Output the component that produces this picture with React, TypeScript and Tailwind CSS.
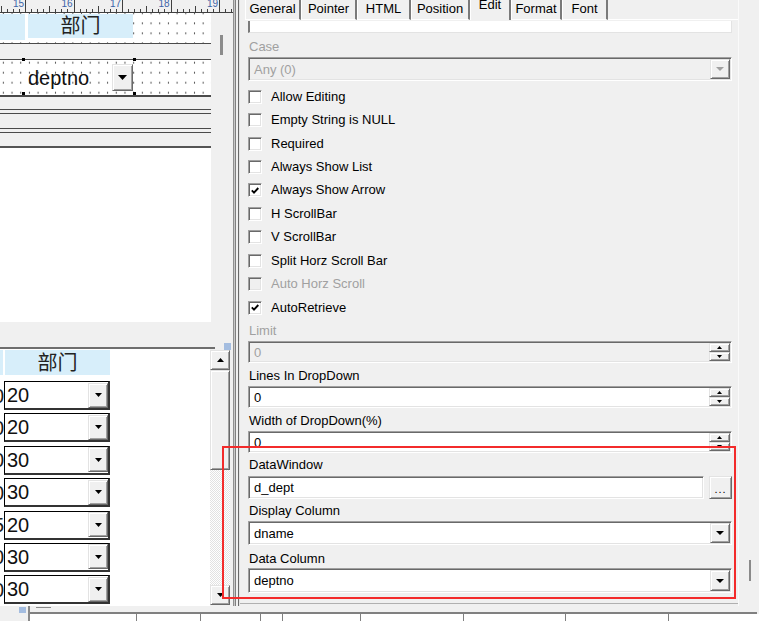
import React from 'react';

const font = "font-['Liberation_Sans',Arial,sans-serif]";
const cjk = "font-['Liberation_Sans','Noto_Sans_CJK_SC',sans-serif]";

const sunken =
  'border border-t-[#a0a0a0] border-l-[#a0a0a0] border-r-white border-b-white shadow-[inset_1px_1px_0_#696969,inset_-1px_-1px_0_#e3e3e3]';
const raised =
  'border border-t-[#e3e3e3] border-l-[#e3e3e3] border-r-[#696969] border-b-[#696969] bg-[#f0f0f0] shadow-[inset_1px_1px_0_#ffffff,inset_-1px_-1px_0_#a0a0a0]';
const dots =
  '[background-image:radial-gradient(circle,#5a5a5a_0.7px,transparent_1.1px)] [background-size:8.7px_10px]';

function Tri({ up, w = 7, color = '#000' }: { up?: boolean; w?: number; color?: string }) {
  const h = Math.ceil(w / 2);
  return (
    <svg width={w} height={h} viewBox={`0 0 ${w} ${h}`} className="block">
      <path d={up ? `M0 ${h}H${w}L${w / 2} 0Z` : `M0 0H${w}L${w / 2} ${h}Z`} fill={color} />
    </svg>
  );
}

function Ruler() {
  const ticks: React.ReactNode[] = [];
  for (let i = -4; i <= 34; i++) {
    const x = Math.round(25 + i * 6.0625) + 0.5;
    const m = ((i % 8) + 8) % 8;
    const top = m === 0 ? 0 : m === 4 ? 6 : 9;
    ticks.push(<line key={i} x1={x} x2={x} y1={top} y2={12} stroke="#404040" strokeWidth={1} />);
  }
  return (
    <svg width="233" height="13" className="block">
      <rect width="233" height="13" fill="#f0f0f0" />
      {ticks}
      <line x1="0" x2="233" y1="12.5" y2="12.5" stroke="#404040" />
      {[15, 16, 17, 18, 19].map((n, k) => (
        <text
          key={n}
          x={24 + k * 48.5}
          y={7}
          fontSize={10}
          textAnchor="end"
          fill="#3c64a8"
          fontFamily="Liberation Sans, Arial, sans-serif"
        >
          {n}
        </text>
      ))}
    </svg>
  );
}

function Handle({ className }: { className: string }) {
  return <div className={`absolute h-[3px] w-[3px] bg-black ${className}`} />;
}

function DesignCanvas() {
  const line = 'h-[1px] bg-[#4a4a4a]';
  return (
    <div className="flex w-[211px] flex-col">
      {/* header band */}
      <div className={`flex h-[30px] bg-white pt-[1px] ${dots} [background-position:-1px_-4.7px]`}>
        <div className="h-[26px] w-[25px] bg-[#d7eefa]" />
        <div
          className={`ml-[3px] flex h-[24px] w-[105px] items-center justify-center bg-[#d7eefa] text-[20px] leading-none text-[#222] ${cjk}`}
        >
          部门
        </div>
      </div>
      <div className={line} />
      <div className="h-[15px]" />
      <div className={line} />
      {/* detail band */}
      <div className={`relative flex h-[35px] bg-white ${dots} [background-position:-1px_-2.3px]`}>
        <Handle className="left-[22px] top-[-2px]" />
        <Handle className="left-[133px] top-[-2px]" />
        <Handle className="left-[22px] top-[32px]" />
        <Handle className="left-[133px] top-[32px]" />
        <div className="ml-[23px] flex h-full w-[112px] items-center">
          <span className="ml-[5px] text-[20px] leading-none text-[#111]">deptno</span>
          <div className={`ml-auto mr-[2px] flex h-[27px] w-[21px] items-center justify-center ${raised}`}>
            <Tri w={9} />
          </div>
        </div>
      </div>
      <div className="h-[2px] bg-[#4a4a4a]" />
      <div className="h-[12px]" />
      <div className={line} />
      <div className="h-[3px]" />
      <div className={line} />
      <div className="h-[14px]" />
      <div className={line} />
      <div className="h-[3px]" />
      <div className={line} />
      <div className="h-[13px]" />
      <div className="h-[2px] bg-[#555]" />
      <div className="flex-1 bg-white" />
    </div>
  );
}

const rows = [
  { pre: '0', v: '20' },
  { pre: '0', v: '20' },
  { pre: '0', v: '30' },
  { pre: '0', v: '30' },
  { pre: '5', v: '20' },
  { pre: '0', v: '30' },
  { pre: '0', v: '30' },
];

function ScrollBar() {
  return (
    <div className="flex w-[20px] flex-col py-[1px]">
      <div className={`flex h-[20px] items-center justify-center ${raised}`}>
        <Tri up />
      </div>
      <div className={`h-[100px] ${raised}`} />
      <div className="flex-1 [background-image:repeating-conic-gradient(#ffffff_0_25%,#e2e2e2_0_50%)] [background-size:2px_2px]" />
      <div className={`flex h-[20px] items-center justify-center ${raised}`}>
        <Tri />
      </div>
    </div>
  );
}

function Preview() {
  return (
    <div className="flex flex-1">
      <div className="w-[210px] bg-white pt-[1px]">
        <div className="flex h-[25px]">
          <div className="w-[3px] bg-[#d7eefa]" />
          <div
            className={`ml-[2px] flex w-[105px] items-center justify-center bg-[#d7eefa] text-[20px] leading-none text-[#222] ${cjk}`}
          >
            部门
          </div>
        </div>
        <div className="mt-[6px] flex flex-col gap-[3.4px]">
          {rows.map((r, i) => (
            <div key={i} className="flex h-[29px] items-center">
              <div className="flex w-[4px] justify-end overflow-hidden">
                <span className="shrink-0 text-[20px] leading-none text-[#222]">{r.pre}</span>
              </div>
              <div className="flex h-full w-[106px] items-center border-t border-l border-r-2 border-b-2 border-t-black border-l-black border-r-[#333] border-b-[#333]">
                <span className="ml-[2px] text-[20px] leading-none text-[#111]">{r.v}</span>
                <div className={`ml-auto flex h-[25px] w-[20px] items-center justify-center ${raised}`}>
                  <Tri />
                </div>
              </div>
            </div>
          ))}
        </div>
      </div>
      <ScrollBar />
      <div className="flex-1" />
    </div>
  );
}

function LeftPane() {
  return (
    <div className="flex w-[233px] shrink-0 flex-col">
      <Ruler />
      <div className="flex h-[309px]">
        <DesignCanvas />
        <div className="flex-1 pl-[9px] pt-[22px]">
          <div className="h-[20px] w-[3px] bg-[#8c8c8c]" />
        </div>
      </div>
      <div className="h-[23px]" />
      <div className="flex h-[4px]">
        <div className="mt-[2px] h-[2px] w-[215px] bg-[#6e6e6e]" />
        <div className="-mt-[2px] ml-[9px] h-[7px] w-[7px] bg-[#a4bde0]" />
      </div>
      <Preview />
    </div>
  );
}

function Splitter() {
  return (
    <div className="flex w-[7px] shrink-0">
      <div className="w-[1px] bg-[#909090]" />
      <div className="w-[1px] bg-[#c8c8c8]" />
      <div className="w-[1px] bg-[#808080]" />
      <div className="w-[2px]" />
      <div className="w-[1px] bg-[#696969]" />
      <div className="w-[1px] bg-[#e3e3e3]" />
    </div>
  );
}

const tabs = [
  { t: 'General', w: 'w-[56px]' },
  { t: 'Pointer', w: 'w-[56px]' },
  { t: 'HTML', w: 'w-[54px]' },
  { t: 'Position', w: 'w-[59px]' },
  { t: 'Edit', w: 'w-[41px]', on: true },
  { t: 'Format', w: 'w-[51px]' },
  { t: 'Font', w: 'w-[46px]' },
];

const checks = [
  { l: 'Allow Editing' },
  { l: 'Empty String is NULL' },
  { l: 'Required' },
  { l: 'Always Show List' },
  { l: 'Always Show Arrow', c: true },
  { l: 'H ScrollBar' },
  { l: 'V ScrollBar' },
  { l: 'Split Horz Scroll Bar' },
  { l: 'Auto Horz Scroll', d: true },
  { l: 'AutoRetrieve', c: true },
];

function Label({ text, className, disabled }: { text: string; className: string; disabled?: boolean }) {
  return (
    <div
      className={`h-[16px] pl-[1px] text-[13px] leading-[16px] ${disabled ? 'text-[#a0a0a0]' : 'text-black'} ${className}`}
    >
      {text}
    </div>
  );
}

function Spin({ value, disabled, className }: { value: string; disabled?: boolean; className: string }) {
  return (
    <div
      className={`flex h-[22px] items-center p-[1px] ${sunken} ${disabled ? 'bg-[#f0f0f0] text-[#a0a0a0]' : 'bg-white text-black'} ${className}`}
    >
      <span className="ml-[4px] flex-1 text-[13px] leading-none">{value}</span>
      <div className="flex h-full w-[21px] flex-col">
        <div className={`flex flex-1 items-center justify-center ${raised}`}>
          <Tri up w={5} />
        </div>
        <div className={`flex flex-1 items-center justify-center ${raised}`}>
          <Tri w={5} />
        </div>
      </div>
    </div>
  );
}

function Drop({
  value,
  disabled,
  className,
}: {
  value: string;
  disabled?: boolean;
  className: string;
}) {
  return (
    <div
      className={`flex items-center p-[1px] ${sunken} ${disabled ? 'bg-[#f0f0f0] text-[#a0a0a0]' : 'bg-white text-black'} ${className}`}
    >
      <span className="ml-[4px] flex-1 text-[13px] leading-none">{value}</span>
      <div className={`flex h-full w-[20px] items-center justify-center ${raised}`}>
        <Tri w={8} color={disabled ? '#a0a0a0' : '#000'} />
      </div>
    </div>
  );
}

function RightPane() {
  return (
    <div className="flex flex-1">
      <div className="flex w-[498px] flex-col">
        <div className="flex h-[20px] pl-[5px]">
          {tabs.map((tab) => (
            <div
              key={tab.t}
              className={`flex h-full shrink-0 justify-center border-l border-r-2 border-l-white border-r-[#7a7a7a] text-[13px] leading-[15px] ${tab.w} ${tab.on ? '' : 'border-b border-b-white pt-[1px]'}`}
            >
              <span className={tab.on ? 'relative -top-[3px]' : ''}>{tab.t}</span>
            </div>
          ))}
          <div className="flex-1 border-b border-b-white" />
        </div>
        <div className="flex flex-col pl-[8px] pr-[6px]">
          <div className="mt-[1px] h-[12px] border-l-2 border-b border-r border-l-[#7a7a7a] border-b-[#e3e3e3] border-r-[#e3e3e3] bg-white" />
          <Label text="Case" disabled className="mt-[6px]" />
          <Drop value="Any (0)" disabled className="mt-[2px] h-[24px]" />
          <div className="mt-[4px] flex flex-col">
            {checks.map((c) => (
              <div key={c.l} className="flex h-[23.45px] items-center">
                <div
                  className={`flex h-[14px] w-[14px] items-center justify-center ${sunken} ${c.d ? 'bg-[#f0f0f0]' : 'bg-white'}`}
                >
                  {c.c && (
                    <svg width="8" height="7" viewBox="0 0 8 7" className="block">
                      <path d="M0.8 3.4 L3 5.6 L7.3 1" fill="none" stroke="#000" strokeWidth="1.9" />
                    </svg>
                  )}
                </div>
                <span
                  className={`ml-[9px] text-[13px] leading-[16px] ${c.d ? 'text-[#a0a0a0]' : 'text-black'}`}
                >
                  {c.l}
                </span>
              </div>
            ))}
          </div>
          <Label text="Limit" disabled className="mt-[4px]" />
          <Spin value="0" disabled className="mt-[2px]" />
          <Label text="Lines In DropDown" className="mt-[5px]" />
          <Spin value="0" className="mt-[2px]" />
          <Label text="Width of DropDown(%)" className="mt-[5px]" />
          <Spin value="0" className="mt-[2px]" />
          <Label text="DataWindow" className="mt-[4px]" />
          <div className="mt-[3px] flex h-[23px]">
            <div className={`flex flex-1 items-center bg-white ${sunken}`}>
              <span className="ml-[5px] text-[13px] leading-none">d_dept</span>
            </div>
            <div className={`ml-[5px] flex w-[23px] items-end justify-center pb-[3px] ${raised}`}>
              <span className="text-[11px] leading-none tracking-[1px]">...</span>
            </div>
          </div>
          <Label text="Display Column" className="mt-[4px]" />
          <Drop value="dname" className="mt-[2px] h-[24px]" />
          <Label text="Data Column" className="mt-[5.5px]" />
          <Drop value="deptno" className="mt-[1.5px] h-[25px]" />
        </div>
        <div className="mb-[2px] mt-auto h-[1px] bg-[#b0b0b0]" />
      </div>
      <div className="flex flex-1 flex-col border-l border-l-[#fafafa] pl-[10px]">
        <div className="mt-[560px] h-[21px] w-[2px] bg-[#8a8a8a]" />
      </div>
    </div>
  );
}

const cells = [107, 64, 60, 22, 78, 103, 102, 103];

function BottomStrip() {
  return (
    <div className="flex h-[15px]">
      <div className="ml-[19px] mt-[1px] h-[6px] w-[7px] bg-[#a4bde0]" />
      <div className="ml-[2px] h-full w-[2px] bg-[#8a8a8a]" />
      <div className="flex flex-1 flex-col">
        <div className="h-[6px] pl-[6px] pt-[1px]">
          <div className="h-[1px] w-[15px] bg-[#8a8a8a]" />
        </div>
        <div className="mr-[2px] h-[2px] bg-[#808080]" />
        <div className="flex flex-1 bg-white">
          {cells.map((w, i) => (
            <div key={i} className="h-full shrink-0 border-r border-r-[#808080]" style={{ width: w }} />
          ))}
        </div>
      </div>
    </div>
  );
}

export default function App() {
  return (
    <div className={`relative flex h-[621px] w-[759px] flex-col overflow-hidden bg-[#f0f0f0] text-black ${font}`}>
      <div className="flex h-[606px]">
        <LeftPane />
        <Splitter />
        <RightPane />
      </div>
      <BottomStrip />
      <div className="pointer-events-none absolute left-[222px] top-[446px] h-[153px] w-[514px] border-2 border-[#f32b2b]" />
    </div>
  );
}
